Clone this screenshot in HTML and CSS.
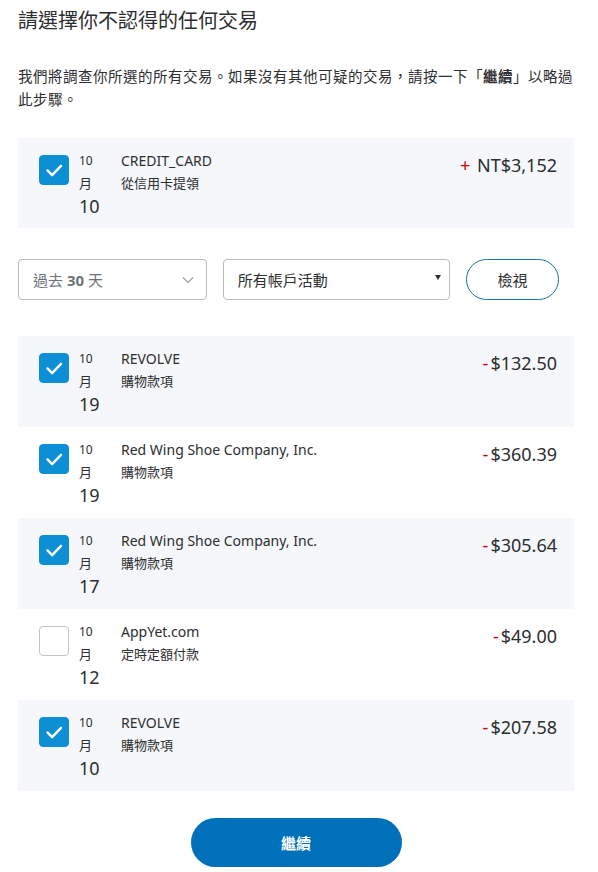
FILE: index.html
```html
<!DOCTYPE html>
<html lang="zh-Hant">
<head>
<meta charset="utf-8">
<link rel="stylesheet" href="styles.css">
</head>
<body>
<main class="page">
  <h1 class="title">請選擇你不認得的任何交易</h1>
  <p class="intro">我們將調查你所選的所有交易。如果沒有其他可疑的交易，請按一下「<b>繼續</b>」以略過此步驟。</p>

  <div class="txn txn-head">
    <span class="cb on"><svg viewBox="0 0 30 30"><path d="M8 15.5l5 5 9.5-10" fill="none" stroke="#fff" stroke-width="2.6" stroke-linecap="round" stroke-linejoin="round"/></svg></span>
    <div class="date"><span class="m">10</span><span class="yue">月</span><span class="d">10</span></div>
    <div class="info"><div class="name">CREDIT_CARD</div><div class="sub">從信用卡提領</div></div>
    <div class="amt"><span class="sign">+</span> NT$3,152</div>
  </div>

  <div class="filters">
    <div class="sel sel-range"><span>過去 <b>30</b> 天</span><svg class="chev" viewBox="0 0 12 8"><path d="M1 1.5l5 5 5-5" fill="none" stroke="#9aa0a4" stroke-width="1.2"/></svg></div>
    <div class="sel sel-acct"><span>所有帳戶活動</span><svg class="tri" viewBox="0 0 6 5"><path d="M0 0h6L3 5z" fill="#2c2e2f"/></svg></div>
    <button class="view">檢視</button>
  </div>

  <div class="list">
    <div class="txn alt">
      <span class="cb on"><svg viewBox="0 0 30 30"><path d="M8 15.5l5 5 9.5-10" fill="none" stroke="#fff" stroke-width="2.6" stroke-linecap="round" stroke-linejoin="round"/></svg></span>
      <div class="date"><span class="m">10</span><span class="yue">月</span><span class="d">19</span></div>
      <div class="info"><div class="name">REVOLVE</div><div class="sub">購物款項</div></div>
      <div class="amt"><span class="sign">-</span>$132.50</div>
    </div>
    <div class="txn">
      <span class="cb on"><svg viewBox="0 0 30 30"><path d="M8 15.5l5 5 9.5-10" fill="none" stroke="#fff" stroke-width="2.6" stroke-linecap="round" stroke-linejoin="round"/></svg></span>
      <div class="date"><span class="m">10</span><span class="yue">月</span><span class="d">19</span></div>
      <div class="info"><div class="name">Red Wing Shoe Company, Inc.</div><div class="sub">購物款項</div></div>
      <div class="amt"><span class="sign">-</span>$360.39</div>
    </div>
    <div class="txn alt">
      <span class="cb on"><svg viewBox="0 0 30 30"><path d="M8 15.5l5 5 9.5-10" fill="none" stroke="#fff" stroke-width="2.6" stroke-linecap="round" stroke-linejoin="round"/></svg></span>
      <div class="date"><span class="m">10</span><span class="yue">月</span><span class="d">17</span></div>
      <div class="info"><div class="name">Red Wing Shoe Company, Inc.</div><div class="sub">購物款項</div></div>
      <div class="amt"><span class="sign">-</span>$305.64</div>
    </div>
    <div class="txn">
      <span class="cb"></span>
      <div class="date"><span class="m">10</span><span class="yue">月</span><span class="d">12</span></div>
      <div class="info"><div class="name">AppYet.com</div><div class="sub">定時定額付款</div></div>
      <div class="amt"><span class="sign">-</span>$49.00</div>
    </div>
    <div class="txn alt">
      <span class="cb on"><svg viewBox="0 0 30 30"><path d="M8 15.5l5 5 9.5-10" fill="none" stroke="#fff" stroke-width="2.6" stroke-linecap="round" stroke-linejoin="round"/></svg></span>
      <div class="date"><span class="m">10</span><span class="yue">月</span><span class="d">10</span></div>
      <div class="info"><div class="name">REVOLVE</div><div class="sub">購物款項</div></div>
      <div class="amt"><span class="sign">-</span>$207.58</div>
    </div>
  </div>

  <div class="actions"><button class="continue">繼續</button></div>
</main>
</body>
</html>
```

FILE: styles.css
```css
* { box-sizing: border-box; }
html, body { margin: 0; padding: 0; background: #fff; }
body {
  font-family: "Noto Sans", "Noto Sans CJK TC", sans-serif;
  color: #2c2e2f;
}
.page {
  width: 556px;
  margin-left: 18px;
  padding-top: 7px;
}
.title {
  margin: 0;
  font-size: 20px;
  font-weight: 400;
  line-height: 28px;
  color: #2c2e2f;
}
.intro {
  margin: 30px 0 0;
  font-size: 14.5px;
  line-height: 23px;
  letter-spacing: 0.5px;
  color: #2c2e2f;
}
.intro b { font-weight: 700; }

.txn {
  display: flex;
  align-items: flex-start;
  height: 91px;
  padding: 11px 17px 0 21px;
  background: #fff;
}
.txn.alt, .txn-head { background: #f5f7fa; }
.txn-head { height: 90px; margin-top: 27px; }

.cb {
  flex: none;
  width: 30px;
  height: 30px;
  margin-top: 6px;
  border: 1px solid #c0c4c7;
  border-radius: 4px;
  background: #fff;
}
.cb.on { background: #0d8fd6; border-color: #0d8fd6; }
.cb svg { display: block; width: 28px; height: 28px; }

.date {
  flex: none;
  width: 42px;
  margin-left: 10px;
  display: flex;
  flex-direction: column;
  line-height: 23px;
  color: #2c2e2f;
}
.date .m { font-size: 12px; }
.date .yue { font-size: 13px; }
.date .d { font-size: 18px; }

.info { flex: 1; line-height: 23px; }
.name { font-size: 14px; }
.sub { font-size: 13px; }

.amt {
  flex: none;
  margin-top: 5px;
  font-size: 18px;
  line-height: 23px;
  color: #2c2e2f;
}
.sign { color: #d20000; margin-right: 2px; }

.filters {
  display: flex;
  align-items: center;
  gap: 16px;
  margin-top: 31px;
  width: 541px;
}
.sel {
  height: 41px;
  border: 1px solid #b7bcbf;
  border-radius: 4px;
  display: flex;
  align-items: center;
  justify-content: space-between;
  font-size: 15px;
  background: #fff;
}
.sel-range { width: 189px; padding: 0 12px 0 14px; color: #6c7378; }
.sel-range b { font-weight: 700; }
.chev { width: 12px; height: 8px; }
.sel-acct { width: 228px; padding: 0 8px 0 14px; color: #2c2e2f; }
.tri { width: 6px; height: 5px; margin-top: -4px; }
.view {
  width: 93px;
  height: 41px;
  border: 1px solid #1a6ea8;
  border-radius: 21px;
  background: #fff;
  font-family: inherit;
  font-size: 15px;
  color: #2c2e2f;
  padding: 0;
}

.list { margin-top: 36px; }

.actions {
  display: flex;
  justify-content: center;
  margin-top: 27px;
}
.continue {
  width: 211px;
  height: 49px;
  border: none;
  border-radius: 25px;
  background: #0070ba;
  color: #fff;
  font-family: inherit;
  font-size: 15px;
  font-weight: 700;
  padding: 0;
}
```
